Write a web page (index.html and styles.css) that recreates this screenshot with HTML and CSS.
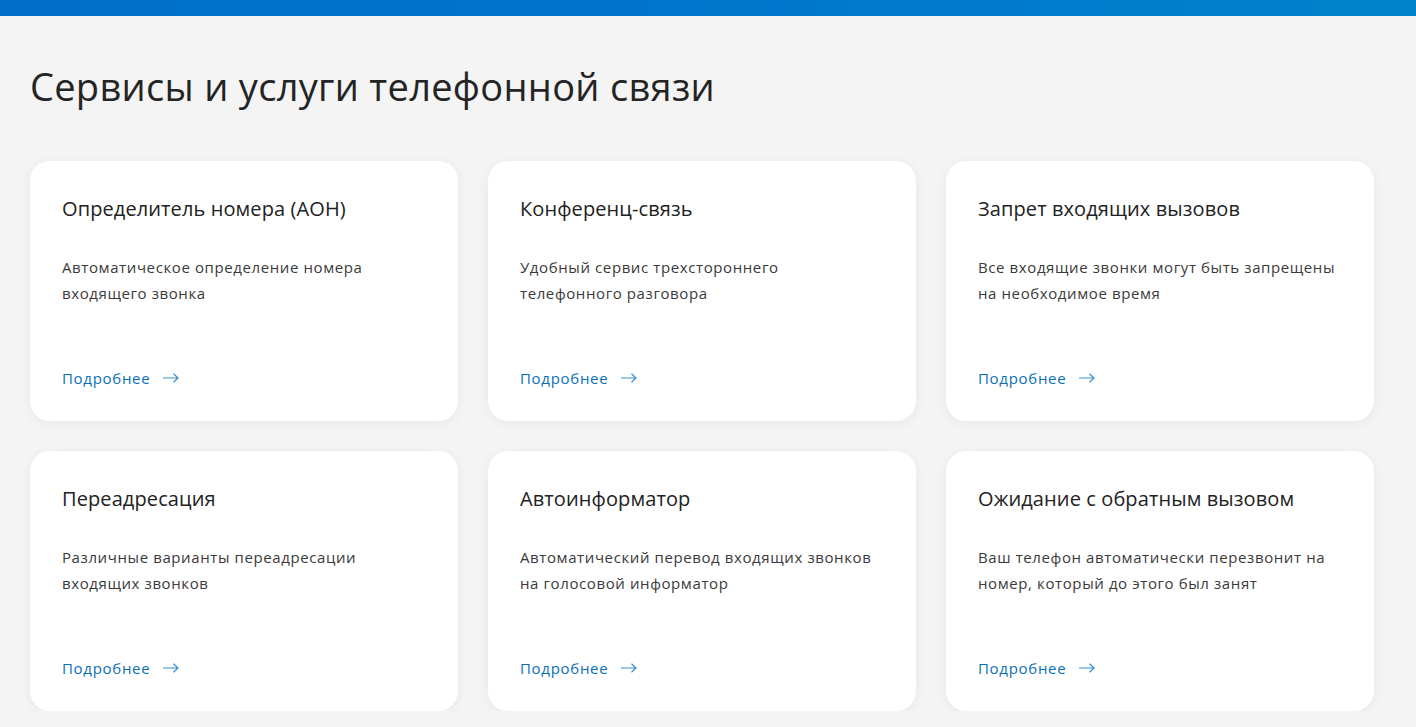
FILE: index.html
```html
<!DOCTYPE html>
<html lang="ru">
<head>
<meta charset="utf-8">
<link rel="stylesheet" href="styles.css">
</head>
<body>
<div class="topbar"></div>
<main class="page">
  <h1 class="title">Сервисы и услуги телефонной связи</h1>
  <div class="grid">
    <div class="card">
      <div class="card-title">Определитель номера (АОН)</div>
      <p class="card-text">Автоматическое определение номера<br>входящего звонка</p>
      <a class="more" href="#">Подробнее <svg class="arrow" viewBox="0 0 16 10" width="16" height="10"><path d="M0 5H15M10.5 0.8L15 5L10.5 9.2" fill="none" stroke="currentColor" stroke-width="1.2"/></svg></a>
    </div>
    <div class="card">
      <div class="card-title">Конференц-связь</div>
      <p class="card-text">Удобный сервис трехстороннего<br>телефонного разговора</p>
      <a class="more" href="#">Подробнее <svg class="arrow" viewBox="0 0 16 10" width="16" height="10"><path d="M0 5H15M10.5 0.8L15 5L10.5 9.2" fill="none" stroke="currentColor" stroke-width="1.2"/></svg></a>
    </div>
    <div class="card">
      <div class="card-title">Запрет входящих вызовов</div>
      <p class="card-text">Все входящие звонки могут быть запрещены<br>на необходимое время</p>
      <a class="more" href="#">Подробнее <svg class="arrow" viewBox="0 0 16 10" width="16" height="10"><path d="M0 5H15M10.5 0.8L15 5L10.5 9.2" fill="none" stroke="currentColor" stroke-width="1.2"/></svg></a>
    </div>
    <div class="card">
      <div class="card-title">Переадресация</div>
      <p class="card-text">Различные варианты переадресации<br>входящих звонков</p>
      <a class="more" href="#">Подробнее <svg class="arrow" viewBox="0 0 16 10" width="16" height="10"><path d="M0 5H15M10.5 0.8L15 5L10.5 9.2" fill="none" stroke="currentColor" stroke-width="1.2"/></svg></a>
    </div>
    <div class="card">
      <div class="card-title">Автоинформатор</div>
      <p class="card-text">Автоматический перевод входящих звонков<br>на голосовой информатор</p>
      <a class="more" href="#">Подробнее <svg class="arrow" viewBox="0 0 16 10" width="16" height="10"><path d="M0 5H15M10.5 0.8L15 5L10.5 9.2" fill="none" stroke="currentColor" stroke-width="1.2"/></svg></a>
    </div>
    <div class="card">
      <div class="card-title">Ожидание с обратным вызовом</div>
      <p class="card-text">Ваш телефон автоматически перезвонит на<br>номер, который до этого был занят</p>
      <a class="more" href="#">Подробнее <svg class="arrow" viewBox="0 0 16 10" width="16" height="10"><path d="M0 5H15M10.5 0.8L15 5L10.5 9.2" fill="none" stroke="currentColor" stroke-width="1.2"/></svg></a>
    </div>
  </div>
</main>
</body>
</html>
```
FILE: styles.css
```css
* { box-sizing: border-box; }
html, body { margin: 0; padding: 0; }
body {
  background: #f4f4f4;
  font-family: "Open Sans", "Noto Sans", sans-serif;
  color: #222;
  overflow: hidden;
}
.topbar {
  height: 16px;
  background: linear-gradient(90deg, #006ec8 0%, #0072cb 30%, #0078cc 60%, #0083cc 100%);
}
.page {
  padding: 0 30px;
}
.title {
  margin: 0;
  padding-top: 48px;
  font-size: 38px;
  font-weight: 400;
  line-height: 44px;
  letter-spacing: 0.3px;
  color: #242424;
}
.grid {
  margin-top: 53px;
  display: grid;
  grid-template-columns: repeat(3, 428px);
  grid-auto-rows: 260px;
  gap: 30px;
}
.card {
  background: #fff;
  border-radius: 20px;
  box-shadow: 0 2px 12px rgba(0,0,0,0.06);
  padding: 34px 32px 32px;
  display: flex;
  flex-direction: column;
}
.card-title {
  font-size: 20px;
  line-height: 28px;
  letter-spacing: 0.1px;
  color: #222;
}
.card-text {
  margin: 31px 0 0;
  font-size: 15px;
  line-height: 26px;
  letter-spacing: 0.6px;
  color: #3a3a3a;
}
.more {
  margin-top: auto;
  font-size: 15px;
  line-height: 22px;
  letter-spacing: 0.7px;
  color: #0a6fb7;
  text-decoration: none;
  display: inline-flex;
  align-items: center;
  gap: 13px;
}
.arrow { color: #3a8fd0; }
```
